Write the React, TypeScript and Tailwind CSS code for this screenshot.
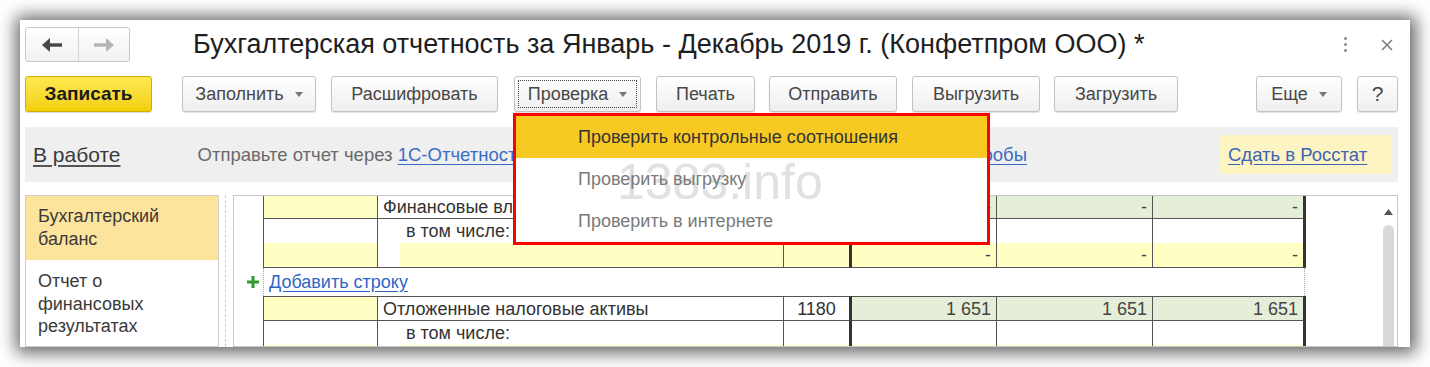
import type { ReactNode } from 'react';

function Caret() {
  return (
    <svg width="8" height="5" viewBox="0 0 8 5" className="shrink-0">
      <path d="M0 0h8L4 5z" fill="#777" />
    </svg>
  );
}

function NavArrow({ dir, color }: { dir: 'left' | 'right'; color: string }) {
  return (
    <svg width="20" height="14" viewBox="0 0 20 14" className={dir === 'right' ? 'rotate-180' : ''}>
      <path d="M0 7 8 0v14z" fill={color} />
      <rect x="7" y="5.3" width="13" height="3.4" fill={color} />
    </svg>
  );
}

function ToolButton({
  label,
  className,
  caret = false,
  focused = false,
}: {
  label: string;
  className: string;
  caret?: boolean;
  focused?: boolean;
}) {
  return (
    <button
      type="button"
      className={`relative flex h-[36px] shrink-0 items-center justify-center gap-[11px] rounded-[3px] border border-[#c2c2c2] bg-linear-to-b from-white to-[#efefef] text-[18px] text-[#474747] shadow-[0_1px_1px_rgba(0,0,0,0.12)] ${className}`}
    >
      {focused && <span className="pointer-events-none absolute inset-[3px] border border-dotted border-[#444]" />}
      <span>{label}</span>
      {caret && <Caret />}
    </button>
  );
}

function Num({ children, className }: { children?: ReactNode; className: string }) {
  return (
    <div className={`flex items-center justify-end border-r border-b border-[#555] pr-[5px] text-[#444] ${className}`}>
      {children}
    </div>
  );
}

// ячейка в две строки: сверху белая, снизу поле ввода
function SplitCell({ className, value, indent = false }: { className: string; value?: string; indent?: boolean }) {
  return (
    <div className={`flex flex-col border-r border-b border-[#555] ${className}`}>
      <div className="h-[24px] shrink-0" />
      <div className="flex flex-1">
        {indent && <div className="w-[22px]" />}
        <div className="flex flex-1 items-center justify-end bg-[#ffffc4] pr-[5px] text-[#444]">{value}</div>
      </div>
    </div>
  );
}

export default function App() {
  return (
    <div className="h-[367px] w-[1430px] overflow-hidden bg-white pl-[20px] pt-[20px] font-['Liberation_Sans',Arial,sans-serif]">
      <div className="relative flex h-[327px] w-[1390px] flex-col overflow-hidden bg-white pl-[5px] pr-[12px] shadow-[1px_1px_16px_5px_rgba(0,0,0,0.6)]">
        {/* Заголовок */}
        <div className="mt-[7px] flex h-[35px] shrink-0 items-center">
          <div className="flex h-[35px] w-[105px] rounded-[3px] border border-[#c8c8c8] bg-linear-to-b from-white to-[#f1f1f1]">
            <div className="flex w-[53px] items-center justify-center border-r border-[#d4d4d4]">
              <NavArrow dir="left" color="#474747" />
            </div>
            <div className="flex flex-1 items-center justify-center">
              <NavArrow dir="right" color="#b4b4b4" />
            </div>
          </div>
          <h1 className="ml-[63px] whitespace-nowrap text-[27px] leading-none text-[#1e1e1e]">
            Бухгалтерская отчетность за Январь - Декабрь 2019 г. (Конфетпром ООО) *
          </h1>
          <div className="ml-auto mr-[5px] flex items-center gap-[34px]">
            <div className="flex flex-col gap-[3px]">
              <span className="h-[3px] w-[3px] rounded-full bg-[#8a8a8a]" />
              <span className="h-[3px] w-[3px] rounded-full bg-[#8a8a8a]" />
              <span className="h-[3px] w-[3px] rounded-full bg-[#8a8a8a]" />
            </div>
            <svg width="12" height="12" viewBox="0 0 12 12">
              <path d="M1 1l10 10M11 1 1 11" stroke="#7a7a7a" strokeWidth="1.5" />
            </svg>
          </div>
        </div>

        {/* Командная панель */}
        <div className="mt-[14px] flex h-[36px] shrink-0 items-center">
          <button
            type="button"
            className="flex h-[36px] w-[127px] shrink-0 items-center justify-center rounded-[3px] border border-[#cfae00] bg-linear-to-b from-[#ffe94f] to-[#f2d000] text-[19px] font-bold text-[#1b1b1b] shadow-[0_1px_1px_rgba(0,0,0,0.15)]"
          >
            Записать
          </button>
          <ToolButton label="Заполнить" caret className="ml-[30px] w-[134px]" />
          <ToolButton label="Расшифровать" className="ml-[15px] w-[167px]" />
          <ToolButton label="Проверка" caret focused className="ml-[16px] w-[127px]" />
          <ToolButton label="Печать" className="ml-[15px] w-[99px]" />
          <ToolButton label="Отправить" className="ml-[14px] w-[128px]" />
          <ToolButton label="Выгрузить" className="ml-[15px] w-[128px]" />
          <ToolButton label="Загрузить" className="ml-[14px] w-[124px]" />
          <ToolButton label="Еще" caret className="ml-[78px] w-[86px]" />
          <ToolButton label="?" className="ml-[15px] w-[41px] text-[21px] text-[#333]" />
        </div>

        {/* Состояние */}
        <div className="mt-[15px] flex h-[55px] shrink-0 items-center whitespace-nowrap bg-[#efefef] pl-[8px] pr-[6px]">
          <a className="text-[21px] text-[#3a3a3a] underline decoration-[#555] underline-offset-[3px]">В работе</a>
          <span className="ml-[77px] text-[18.5px] text-[#6a6a6a]">
            Отправьте отчет через{' '}
            <a className="text-[#3b6cc4] underline underline-offset-[3px]">1С-Отчетность</a> или{' '}
            <a className="text-[#3b6cc4] underline underline-offset-[3px]">подключитесь к 1С-Отчетности бесплатно для пробы</a>
          </span>
          <div className="ml-auto flex h-[39px] w-[173px] shrink-0 items-center bg-[#fcf4c2] pl-[9px]">
            <a className="text-[18.5px] text-[#3c63b6] underline underline-offset-[3px]">Сдать в Росстат</a>
          </div>
        </div>

        {/* Форма отчета */}
        <div className="mt-[13px] flex min-h-0 flex-1 text-[18px] text-[#333]">
          <div className="w-[194px] shrink-0 border border-[#cfcfcf] text-[18px] leading-[23px] text-[#3a3a3a]">
            <div className="h-[64px] bg-[#fde49c] pl-[12px] pt-[9px]">
              Бухгалтерский
              <br />
              баланс
            </div>
            <div className="pl-[12px] pt-[10px] leading-[22.5px]">
              Отчет о
              <br />
              финансовых
              <br />
              результатах
            </div>
          </div>
          <div className="w-[14px] shrink-0 pl-[6px]">
            <div className="h-full border-l border-dashed border-[#cccccc]" />
          </div>
          <div className="flex min-w-0 flex-1 overflow-hidden border border-[#c8c8c8]">
            <div className="flex w-[1072px] shrink-0 flex-col leading-[22px]">
              {/* Финансовые вложения */}
              <div className="flex h-[23px] shrink-0">
                <div className="w-[29px]" />
                <div className="w-[115px] border-x border-b border-[#555] bg-[#ffffc4]" />
                <div className="flex w-[406px] items-center whitespace-nowrap border-r border-b border-[#555] pl-[5px]">
                  Финансовые вложения
                </div>
                <div className="flex w-[68px] items-center justify-center border-b border-r-[3px] border-[#555] border-r-[#333]">
                  1170
                </div>
                <Num className="w-[145px] bg-[#e4eed9]">-</Num>
                <Num className="w-[156px] bg-[#e4eed9]">-</Num>
                <Num className="w-[153px] border-r-[3px] border-r-[#333] bg-[#e4eed9]">-</Num>
              </div>
              {/* в том числе */}
              <div className="flex h-[49px] shrink-0">
                <div className="w-[29px]" />
                <div className="w-[115px] border-l border-[#555]">
                  <SplitCell className="h-full w-[114px]" />
                </div>
                <div className="relative w-[406px]">
                  <SplitCell className="h-full" indent />
                  <span className="absolute left-[28px] top-[1px]">в том числе:</span>
                </div>
                <SplitCell className="w-[68px] border-r-[3px] border-r-[#333]" />
                <SplitCell className="w-[145px]" value="-" />
                <SplitCell className="w-[156px]" value="-" />
                <SplitCell className="w-[153px] border-r-[3px] border-r-[#333]" value="-" />
              </div>
              {/* Добавить строку */}
              <div className="flex h-[28px] shrink-0">
                <div className="flex w-[29px] items-center justify-end pr-[4px]">
                  <svg width="12" height="12" viewBox="0 0 12 12">
                    <path d="M6 0v12M0 6h12" stroke="#2f9a2f" strokeWidth="3" />
                  </svg>
                </div>
                <div className="flex w-[1042px] items-center border-x border-dotted border-[#aaa] pl-[5px]">
                  <a className="text-[#2f66c4] underline underline-offset-[3px]">Добавить строку</a>
                </div>
              </div>
              {/* Отложенные налоговые активы */}
              <div className="flex h-[25px] shrink-0">
                <div className="w-[29px]" />
                <div className="w-[115px] border border-[#555] bg-[#ffffc4]" />
                <div className="flex w-[406px] items-center border-y border-r border-[#555] pl-[5px]">
                  Отложенные налоговые активы
                </div>
                <div className="flex w-[68px] items-center justify-center border-y border-r-[3px] border-[#555] border-r-[#333]">
                  1180
                </div>
                <Num className="w-[145px] border-t bg-[#e4eed9]">1 651</Num>
                <Num className="w-[156px] border-t bg-[#e4eed9]">1 651</Num>
                <Num className="w-[153px] border-t border-r-[3px] border-r-[#333] bg-[#e4eed9]">1 651</Num>
              </div>
              {/* в том числе */}
              <div className="flex h-[49px] shrink-0">
                <div className="w-[29px]" />
                <div className="w-[115px] border-l border-[#555]">
                  <SplitCell className="h-full w-[114px]" />
                </div>
                <div className="relative w-[406px]">
                  <SplitCell className="h-full" indent />
                  <span className="absolute left-[28px] top-[1px]">в том числе:</span>
                </div>
                <SplitCell className="w-[68px] border-r-[3px] border-r-[#333]" />
                <SplitCell className="w-[145px]" />
                <SplitCell className="w-[156px]" />
                <SplitCell className="w-[153px] border-r-[3px] border-r-[#333]" />
              </div>
            </div>
            <div className="flex-1" />
            {/* прокрутка */}
            <div className="mr-[2px] flex w-[14px] flex-col items-center pt-[13px]">
              <svg width="9" height="6" viewBox="0 0 9 6">
                <path d="M0 6h9L4.5 0z" fill="#555" />
              </svg>
              <div className="mt-[10px] w-[11px] flex-1 rounded-t-full bg-[#d9d9d9]" />
            </div>
          </div>
        </div>

        {/* Выпадающее меню «Проверка» */}
        <div className="absolute left-[493px] top-[93px] h-[132px] w-[477px] border-[3px] border-[#ff0000] bg-white text-[18px]">
          <div className="pointer-events-none absolute left-[101px] top-[41px] text-[50px] leading-none text-[#e1e1e1]">
            1383.info
          </div>
          <div className="relative flex h-[42px] items-center bg-[#f8c923] pl-[62px] text-[#333]">
            Проверить контрольные соотношения
          </div>
          <div className="relative flex h-[42px] items-center pl-[62px] text-[#7a7a7a]">Проверить выгрузку</div>
          <div className="relative flex h-[42px] items-center pl-[62px] text-[#7a7a7a]">Проверить в интернете</div>
        </div>
      </div>
    </div>
  );
}
